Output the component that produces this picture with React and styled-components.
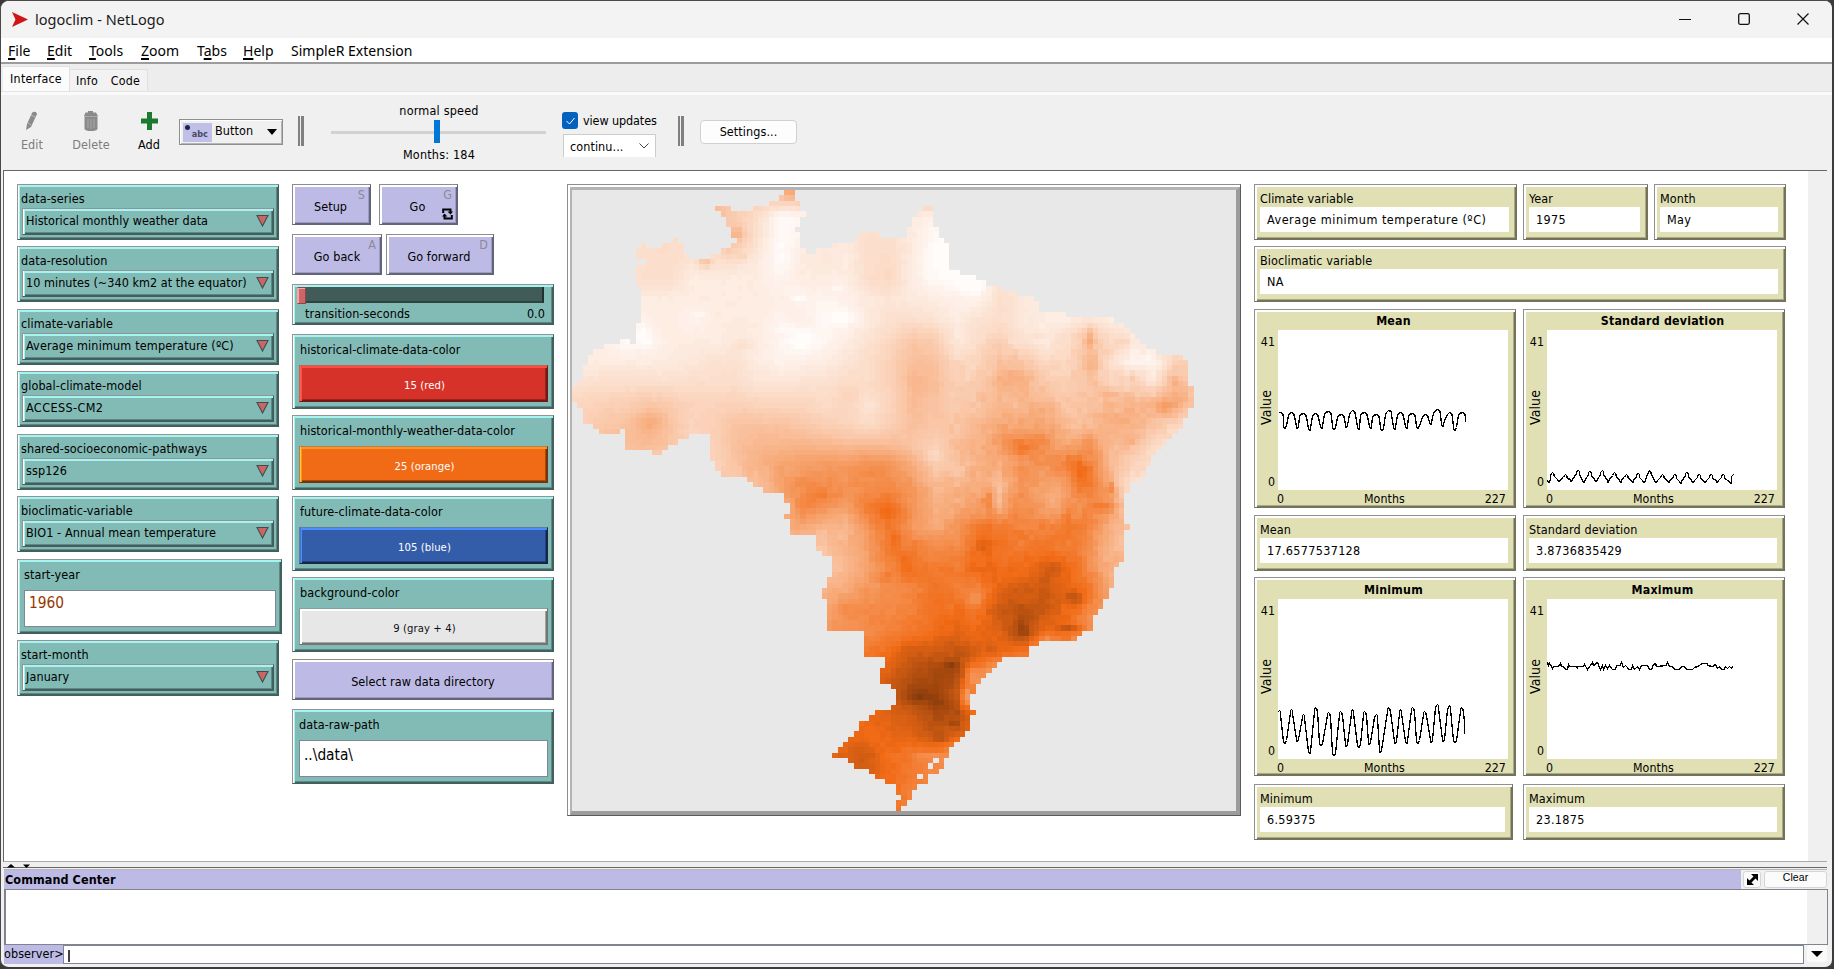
import React from "react";
import styled, { createGlobalStyle, css } from "styled-components";

const GlobalStyle = createGlobalStyle`
  *, *::before, *::after { box-sizing: border-box; }
  html, body { margin: 0; background: #3b393c; overflow: hidden; }
  body {
    font-family: "DejaVu Sans Condensed", "DejaVu Sans", Tahoma, sans-serif;
    font-size: 12.5px;
    letter-spacing: 0.08px;
    color: #000;
  }
`;

const uiFont = css`font-family: "Noto Sans", "Open Sans", sans-serif;`;

/* ---------- window chrome ---------- */

const Window = styled.div`
  width: 1834px;
  height: 969px;
  display: flex;
  flex-direction: column;
  background: #f0f0f0;
  border: 1px solid #4a484b;
  border-right: 2px solid #3c3c3e;
  border-bottom: 2px solid #3c3a3d;
  border-radius: 9px;
  overflow: hidden;
`;

const TitleBar = styled.header`
  ${uiFont}
  height: 37px;
  flex: none;
  display: flex;
  align-items: center;
  background: #f3f3f3;
  padding: 0 0 1px 10px;
  font-size: 14.5px;
  letter-spacing: 0.03px;
  svg { display: block; }
`;

const TitleText = styled.span`
  flex: 1;
  padding-left: 7px;
  color: #1a1a1a;
`;

const WindowControls = styled.div`
  display: flex;
  padding-right: 23px;
  gap: 47px;
`;

const MenuBar = styled.nav`
  ${uiFont}
  height: 26px;
  flex: none;
  display: flex;
  align-items: center;
  gap: 16px;
  padding-left: 7px;
  background: #fff;
  border-bottom: 2px solid #9c9c9c;
  font-size: 14px;
  letter-spacing: 0.02px;
`;

const MenuItem = styled.span`
  width: ${(p) => p.$w}px;
  white-space: nowrap;
  u { text-underline-offset: 2px; text-decoration-thickness: 1.5px; }
`;

const TabStrip = styled.div`
  height: 27px;
  flex: none;
  display: flex;
  align-items: flex-end;
  padding-left: 2px;
  background: #ededed;
`;

const Tab = styled.div`
  width: ${(p) => p.$w}px;
  height: ${(p) => (p.$active ? 25 : 22)}px;
  padding-top: ${(p) => (p.$active ? 5 : 4)}px;
  text-align: center;
  white-space: nowrap;
  font-size: 12.3px;
  line-height: 15px;
  letter-spacing: ${(p) => (p.$active ? 0.25 : 0.25)}px;
  background: ${(p) => (p.$active ? "#fbfbfb" : "#f2f2f2")};
  border-top: 1px solid #e0e0e0;
  border-right: ${(p) => (p.$edge ? "1px solid #e0e0e0" : "none")};
`;

const TabBase = styled.div`
  height: 4px;
  flex: none;
  background: #fafafa;
  border-top: 1px solid #e4e4e4;
`;

const Toolbar = styled.div`
  height: 75px;
  flex: none;
  display: flex;
  align-items: flex-start;
  padding-left: 7px;
  background: #f0f0f0;
`;

const Tool = styled.div`
  width: ${(p) => p.$w || 58}px;
  padding-top: 16px;
  display: flex;
  flex-direction: column;
  align-items: center;
  gap: 5px;
  line-height: 15px;
  font-size: 12.5px;
  color: ${(p) => (p.$on ? "#000" : "#7d7d7d")};
`;

const WidgetPicker = styled.div`
  margin: 24px 0 0 7px;
  width: 104px;
  height: 26px;
  border: 1px solid #8e8e8e;
  box-shadow: inset 1px 1px 0 #fff, inset -1px -1px 0 #b5b5b5;
  display: flex;
  align-items: center;
  padding: 0 5px 0 3px;
  font-size: 12.5px;
  justify-content: space-between;
`;

const PickerThumb = styled.span`
  width: 29px;
  height: 19px;
  background: #bfbfe8;
  position: relative;
  font-size: 9px;
  font-weight: bold;
  color: #4a4a66;
  text-align: right;
  padding: 5px 4px 0 0;
  line-height: 12px;
  &::before {
    content: "";
    position: absolute;
    left: 2px;
    top: 2px;
    width: 5px;
    height: 5px;
    border-radius: 50%;
    background: #222250;
  }
`;

const PickerName = styled.span`
  flex: 1;
  padding: 0 0 3px 3px;
`;

const Grip = styled.div`
  width: 6px;
  height: 30px;
  margin: 21px 0 0 ${(p) => p.$ml}px;
  border-left: 2.5px solid #808080;
  border-right: 3px solid #808080;
`;

const Speed = styled.div`
  margin: 8px 0 0 27px;
  width: 215px;
  display: flex;
  flex-direction: column;
  align-items: center;
  line-height: 15px;
`;

const SpeedTrack = styled.div`
  margin: 2px 0 4px;
  width: 215px;
  height: 23px;
  display: flex;
  align-items: center;
  justify-content: center;
  background: linear-gradient(#d2d2d2, #d2d2d2) 0 11px / 100% 3px no-repeat;
  &::after {
    content: "";
    width: 6px;
    height: 23px;
    margin-right: 4px;
    background: #0078d7;
  }
`;

const SpeedText = styled.div`
  letter-spacing: 0.2px;
  padding-left: 1px;
`;

const Updates = styled.div`
  margin: 17px 0 0 16px;
  width: 102px;
`;

const CheckRow = styled.div`
  display: flex;
  align-items: center;
  gap: 5px;
  height: 17px;
  white-space: nowrap;
  letter-spacing: -0.1px;
`;

const CheckBox = styled.span`
  width: 16px;
  height: 17px;
  border-radius: 3px;
  background: #0461bd;
  display: flex;
  align-items: center;
  justify-content: center;
`;

const UpdateSelect = styled.div`
  margin: 5px 0 0 1px;
  width: 93px;
  height: 23px;
  background: #fff;
  border: 1px solid #ccc;
  border-bottom: none;
  display: flex;
  align-items: center;
  justify-content: space-between;
  padding: 0 6px 0 6px;
`;

const SettingsButton = styled.div`
  margin: 25px 0 0 16px;
  width: 97px;
  height: 24px;
  background: #fdfdfd;
  border: 1px solid #d0d0d0;
  border-radius: 4px;
  text-align: center;
  line-height: 22px;
`;

/* ---------- interface canvas ---------- */

const Workspace = styled.main`
  height: 692px;
  flex: none;
  margin: 0 5px 0 2px;
  display: flex;
  border-top: 1px solid #666;
  border-left: 1px solid #666;
  border-bottom: 1px solid #aaa;
  background: #fff;
`;

const Board = styled.div`
  width: 1804px;
  display: flex;
  align-items: flex-start;
  padding: 13px 0 0 13px;
`;

const ScrollGutter = styled.div`
  flex: 1;
  background: #f0f0f0;
`;

const Column = styled.section`
  width: ${(p) => p.$w}px;
  margin-right: ${(p) => p.$mr || 0}px;
  display: flex;
  flex-direction: column;
`;

const Row = styled.div`
  display: flex;
  gap: ${(p) => p.$gap || 0}px;
  margin-bottom: ${(p) => p.$mb || 0}px;
`;

const palettes = {
  teal: { bg: "#82bab5", hi: "#a4f5f2", lo: "#5f8885", dark: "#415f5c", outer: "#949494" },
  lilac: { bg: "#bdbbe6", hi: "#ffffff", lo: "#9d9bbf", dark: "#64637c", outer: "#8c8c8c" },
  sand: { bg: "#e0e0b4", hi: "#ffffff", lo: "#a8a885", dark: "#73735c", outer: "#909090" },
  red: { bg: "#d73229", hi: "#ff4b40", lo: "#9c241d", dark: "#6f1a15", outer: "#b06a60", edge: "#ff5f55" },
  orange: { bg: "#f16a15", hi: "#ff9420", lo: "#a84a0f", dark: "#74330a", outer: "#b08050", edge: "#ffc928" },
  blue: { bg: "#345da9", hi: "#4c8dff", lo: "#24417a", dark: "#14264a", outer: "#5c7fa0", edge: "#3f74d4" },
  gray: { bg: "#e7e7e7", hi: "#ffffff", lo: "#a4a4a4", dark: "#747474", outer: "#8c9c9a" },
};

const tone = (key) => (p) => palettes[p.$tone][key];

const bevel = css`
  background: ${tone("bg")};
  border: 1px solid ${tone("dark")};
  border-top-color: ${tone("outer")};
  border-left-color: ${tone("outer")};
  box-shadow:
    inset 1px 0 0 ${(p) => palettes[p.$tone].edge || "#fff"},
    inset 2px 2px 0 ${tone("hi")},
    inset -1px -1px 0 ${tone("dark")},
    inset -2px -2px 0 ${tone("lo")};
`;

const Panel = styled.div`
  ${bevel}
  width: ${(p) => p.$w || 262}px;
  height: ${(p) => p.$h}px;
  flex: none;
  margin-bottom: ${(p) => p.$mb || 0}px;
  padding: ${(p) => p.$pad};
  white-space: nowrap;
  line-height: 17px;
`;

const ChooserField = styled.div`
  ${bevel}
  margin: 1px 0 0 1px;
  width: 252px;
  height: 27px;
  display: flex;
  align-items: center;
  justify-content: space-between;
  padding: 0 4px 2px 3px;
  letter-spacing: ${(p) => p.$ls}px;
`;

const TextField = styled.div`
  height: 37px;
  margin-top: 7px;
  background: #fff;
  border: 1px solid #7f8795;
  padding: ${(p) => p.$pt || 4}px 4px 0;
  font-size: 15.3px;
  letter-spacing: 0;
  line-height: 19px;
  color: ${(p) => p.$color || "#000"};
`;

const Swatch = styled.div`
  ${bevel}
  width: 249px;
  height: 37px;
  margin: 7px 0 0 -1px;
  padding-left: 2px;
  text-align: center;
  font-size: 11.2px;
  line-height: 39px;
  color: ${(p) => (p.$tone === "gray" ? "#111" : "#fff")};
`;

const CommandButton = styled.div`
  ${bevel}
  position: relative;
  width: ${(p) => p.$w}px;
  height: 41px;
  flex: none;
  margin-bottom: ${(p) => p.$mb || 0}px;
  padding-right: ${(p) => p.$pr || 0}px;
  text-align: center;
  line-height: 43px;
  white-space: nowrap;
`;

const KeyHint = styled.span`
  position: absolute;
  right: 5px;
  top: 2px;
  line-height: 15px;
  color: #8b8b94;
`;

const ForeverMark = styled.svg`
  position: absolute;
  right: 4px;
  bottom: 4px;
`;

const SliderTrack = styled.div`
  height: 16px;
  width: 247px;
  background: #415c58;
  border-right: 2px solid #23322f;
  border-bottom: 2px solid #30443f;
`;

const SliderKnob = styled.div`
  width: 9px;
  height: 17px;
  background: #cc6666;
  border: 1px solid #8e4444;
  border-left-color: #ffa0a0;
  box-shadow: inset 1px 1px 0 #f5a8a8;
`;

const SliderText = styled.div`
  display: flex;
  justify-content: space-between;
  padding: 3px 4px 0 8px;
  line-height: 15px;
`;

const MonitorValue = styled.div`
  height: 25px;
  margin-right: 2px;
  background: #fff;
  padding-left: 7px;
  line-height: 26px;
  letter-spacing: ${(p) => p.$ls}px;
`;

const ViewFrame = styled.div`
  width: 674px;
  height: 632px;
  border: 1px solid #8d8d8d;
  border-right-color: #5a5a5a;
  border-bottom-color: #5a5a5a;
  padding: 2px 0 0 2px;
  background: #fff;
`;

const ViewInner = styled.div`
  height: 628px;
  width: 670px;
  border-style: solid;
  border-color: #b4b4b4 #9c9c9c #9c9c9c #b4b4b4;
  border-width: 3px 4px 4px 2px;
  svg { display: block; background: #e8e8e8; }
`;

const PlotBody = styled.div`
  display: grid;
  grid-template-columns: 19px 230px;
  grid-template-rows: 18px 160px 17px;
  padding-left: 1px;
`;

const PlotTitle = styled.div`
  grid-column: 1 / 3;
  text-align: center;
  font-weight: bold;
  font-size: 12.3px;
  line-height: 18px;
  letter-spacing: 0.22px;
  padding-left: 20px;
`;

const YAxis = styled.div`
  display: flex;
  flex-direction: column;
  justify-content: space-between;
  align-items: flex-end;
  padding: 5px 3px 1px 0;
  line-height: 14px;
  font-size: 12.3px;
`;

const YLabel = styled.span`
  writing-mode: vertical-rl;
  transform: rotate(180deg);
  font-size: 14px;
  margin: 0 2px 9px 0;
`;

const PlotArea = styled.div`
  background: #fff;
  svg { display: block; }
`;

const XAxis = styled.div`
  grid-column: 2;
  display: flex;
  justify-content: space-between;
  padding: 0 2px 0 0;
  margin-left: -1px;
  line-height: 18px;
  font-size: 12.3px;
`;

/* ---------- command center ---------- */

const Splitter = styled.div`
  height: 6px;
  flex: none;
  margin: 0 5px 0 2px;
  background: #efefef;
  border-bottom: 1px solid #666;
  padding: 2px 0 0 4px;
  svg { display: block; }
`;

const CommandHead = styled.div`
  height: 20px;
  flex: none;
  margin: 1px 5px 0 3px;
  display: flex;
  border-top: 1px solid #b5b5b5;
`;

const CommandTitle = styled.div`
  width: 1737px;
  background: #bdbbe6;
  font-weight: bold;
  font-size: 12.5px;
  line-height: 20px;
  padding-left: 1px;
`;

const SmallButton = styled.div`
  width: ${(p) => p.$w}px;
  height: 17px;
  margin: 1px 0 0 ${(p) => p.$ml}px;
  border: 1px solid #d5d5d5;
  border-radius: 3px;
  background: #fbfbfb;
  font: 10.5px/11px "Liberation Sans", sans-serif;
  display: flex;
  justify-content: center;
  align-items: ${(p) => p.$align || "center"};
`;

const CommandOutput = styled.div`
  height: 56px;
  flex: none;
  margin-left: 3px;
  width: 1824px;
  display: flex;
  justify-content: flex-end;
  border: 1px solid #80848f;
  border-left-width: 2px;
  background: #fff;
  &::after { content: ""; width: 20px; background: #f0f0f0; }
`;

const CommandLine = styled.div`
  height: 19px;
  flex: none;
  margin: 0 5px 0 3px;
  display: flex;
`;

const Prompt = styled.div`
  width: 59px;
  background: #bdbbe6;
  line-height: 17px;
`;

const CommandInput = styled.div`
  width: 1741px;
  height: 19px;
  background: #fff;
  border: 1px solid #80848f;
  padding: 4px 0 0 4px;
  &::before { content: ""; display: block; width: 2px; height: 12px; background: #444; }
`;

const HistoryButton = styled.div`
  margin-left: 3px;
  width: 20px;
  height: 17px;
  background: #fafafa;
  border-radius: 3px;
  display: flex;
  align-items: center;
  justify-content: center;
`;

/* ---------- raster map ---------- */

const COLS = 125;
const ROWS = 117;
const CELL_W = 1509 / COLS;
const CELL_H = 1498 / ROWS;
const ORIGIN_X = 27;
const ORIGIN_Y = 36;

const outline = `509,36 534,36 534,61 546,61 546,87 558,87 558,100 546,100 546,125 534,125 534,138 546,138 546,176 558,176 558,189 582,189 582,176 618,176 618,164 667,164 667,151 679,151 679,138 727,138 727,151 788,151 788,125 800,125 800,100 812,100 812,87 824,87 824,75 848,75 848,125 860,125 860,151 872,151 872,164 884,164 884,229 908,229 908,241 945,241 945,254 969,254 969,266 1003,266 1003,279 1041,279 1041,292 1077,292 1077,305 1089,305 1089,330 1150,330 1150,343 1259,343 1259,356 1283,356 1283,369 1295,369 1295,381 1307,381 1307,394 1319,394 1319,407 1331,407 1331,420 1355,420 1355,433 1415,433 1415,445 1427,445 1427,509 1437,509 1437,560 1425,560 1425,586 1415,586 1415,612 1403,612 1403,625 1391,625 1391,637 1379,637 1379,650 1367,650 1367,663 1355,663 1355,676 1343,676 1343,701 1331,701 1331,727 1319,727 1319,740 1295,740 1295,766 1283,766 1283,843 1295,843 1295,856 1283,856 1283,932 1271,932 1271,945 1259,945 1259,996 1246,996 1246,1022 1234,1022 1234,1048 1222,1048 1222,1060 1210,1060 1210,1099 1186,1099 1186,1112 1174,1112 1174,1124 1089,1124 1089,1137 1065,1137 1065,1163 1004,1163 1004,1176 992,1176 992,1188 980,1188 980,1201 968,1201 968,1214 956,1214 956,1227 944,1227 944,1252 932,1252 932,1291 944,1291 944,1304 932,1304 932,1342 920,1342 920,1355 908,1355 908,1368 896,1368 896,1381 884,1381 884,1407 872,1407 872,1432 860,1432 860,1445 836,1445 836,1471 812,1471 812,1483 800,1483 800,1509 788,1509 788,1522 776,1522 776,1534 764,1534 764,1509 776,1509 776,1496 764,1496 764,1471 740,1471 740,1458 716,1458 716,1445 703,1445 703,1432 667,1432 667,1420 655,1420 655,1407 618,1407 618,1394 630,1394 630,1381 643,1381 643,1368 655,1368 655,1355 667,1355 667,1342 679,1342 679,1317 703,1317 703,1304 716,1304 716,1291 752,1291 752,1278 764,1278 764,1240 752,1240 752,1227 728,1227 728,1188 740,1188 740,1163 691,1163 691,1099 607,1099 607,1022 595,1022 595,996 607,996 607,971 618,971 618,919 595,919 595,907 582,907 582,868 522,868 522,830 510,830 510,817 522,817 522,791 510,791 510,766 461,766 461,753 437,753 437,740 425,740 425,727 365,727 365,714 353,714 353,689 341,689 341,625 293,625 293,637 269,637 269,650 245,650 245,663 232,663 232,676 208,676 208,663 148,663 148,612 136,612 136,625 88,625 88,612 76,612 76,599 52,599 52,561 39,561 39,548 27,548 27,509 39,509 39,497 52,497 52,458 64,458 64,433 76,433 76,420 100,420 100,407 136,407 136,394 160,394 160,407 173,407 173,356 185,356 185,266 173,266 173,215 197,215 197,202 173,202 173,176 185,176 185,164 197,164 197,176 232,176 232,164 257,164 257,151 269,151 269,164 281,164 281,189 293,189 293,202 341,202 341,189 365,189 365,176 389,176 389,164 401,164 401,151 389,151 389,125 377,125 377,100 365,100 365,87 353,87 353,75 389,75 389,87 437,87 437,75 473,75 473,61 498,61 498,48 509,48`
  .split(" ")
  .map((s) => s.split(",").map(Number));

const lagoons = ["68,107", "67,108", "65,110"];

/* temperature samples every 50 units: y -> [first x, values...] */
const field = {
  0: [500, 26, 28],
  50: [350, 28, 22, 22, 25, 28],
  100: [350, 28, 20, 14, 2, 3, 8, 8, 8, 8, 8, 6],
  150: [200, 15, 15, 14, 18, 26, 12, 2, 5, 10, 10, 14, 14, 9, 2, 0],
  200: [150, 12, 14, 14, 12, 14, 14, 9, 1, 8, 10, 8, 14, 15, 8, 1, 0],
  250: [150, 12, 14, 14, 8, 8, 8, 8, 5, 8, 8, 8, 14, 16, 8, 2, 2, 0, 12],
  300: [150, 9, 8, 8, 8, 8, 8, 8, 7, 5, 5, 6, 9, 11, 9, 8, 6, 5, 14, 10, 8],
  350: [150, 3, 7, 8, 5, 8, 8, 8, 5, 7, 3, 3, 9, 13, 14, 12, 8, 12, 14, 10, 8, 8, 12, 8, 7],
  400: [100, 7, 3, 3, 8, 8, 8, 10, 8, 4, 1, 4, 8, 12, 17, 24, 22, 10, 15, 20, 12, 9, 14, 26, 18, 10, 12],
  450: [50, 8, 8, 8, 8, 8, 10, 12, 12, 8, 5, 7, 8, 11, 14, 20, 26, 26, 17, 18, 26, 25, 18, 16, 26, 15, 8, 7, 18],
  500: [0, 12, 12, 14, 14, 13, 13, 14, 14, 14, 11, 11, 12, 13, 15, 15, 19, 28, 27, 19, 22, 28, 28, 22, 20, 25, 18, 18, 10, 28, 20],
  550: [0, 18, 18, 19, 20, 23, 21, 18, 18, 19, 18, 17, 17, 15, 18, 13, 18, 27, 25, 22, 24, 28, 28, 29, 23, 24, 28, 28, 30, 32, 22],
  600: [50, 19, 23, 25, 30, 24, 18, 20, 25, 25, 25, 23, 20, 18, 15, 20, 26, 24, 24, 28, 32, 32, 34, 26, 26, 30, 30, 25, 18],
  650: [150, 27, 27, 25, 18, 19, 26, 28, 28, 29, 28, 27, 27, 27, 24, 20, 26, 30, 34, 42, 38, 32, 36, 28, 28, 16, 12],
  700: [350, 18, 25, 30, 33, 35, 36, 36, 39, 38, 32, 22, 24, 30, 32, 37, 38, 42, 44, 27, 20, 14],
  750: [400, 24, 26, 33, 40, 40, 38, 40, 40, 36, 28, 28, 32, 30, 38, 34, 36, 44, 30, 12],
  800: [500, 28, 40, 39, 35, 44, 46, 38, 30, 32, 35, 34, 40, 34, 38, 40, 38, 18],
  850: [500, 30, 32, 28, 28, 38, 46, 36, 32, 36, 44, 44, 42, 42, 46, 42, 30, 25],
  900: [600, 24, 30, 35, 44, 44, 40, 40, 49, 47, 45, 47, 44, 40, 28, 24],
  950: [600, 24, 28, 34, 42, 46, 44, 44, 48, 48, 49, 54, 52, 40, 30],
  1000: [600, 30, 32, 37, 39, 42, 46, 44, 42, 54, 56, 58, 54, 46, 32],
  1050: [600, 32, 40, 40, 40, 42, 48, 48, 48, 58, 62, 58, 50, 42, 35],
  1100: [650, 38, 40, 42, 44, 48, 54, 50, 54, 67, 50, 50, 38],
  1150: [700, 44, 50, 58, 58, 60, 56, 52, 46, 35],
  1200: [700, 50, 56, 62, 66, 66, 40, 34],
  1250: [750, 58, 68, 68, 61, 38],
  1300: [700, 50, 54, 58, 64, 66, 45],
  1350: [650, 52, 50, 52, 54, 60, 54],
  1400: [600, 53, 54, 54, 48, 45, 42, 38],
  1450: [650, 57, 55, 50, 44, 40],
  1500: [750, 48, 42],
  1550: [750, 48, 42],
};

/* local departures from the samples: x, y, x radius, y radius, amount */
const anomalies = [
  [330, 212, 14, 10, 14], [402, 140, 12, 16, 6], [520, 45, 16, 14, 6], [380, 188, 14, 8, 7],
  [415, 200, 12, 8, 7], [215, 592, 30, 24, 3], [1205, 385, 10, 20, 8], [1212, 460, 9, 40, 5],
  [1375, 565, 22, 18, 6], [1180, 720, 14, 30, 8], [1155, 685, 10, 14, 5], [1050, 655, 40, 20, 3],
  [600, 775, 34, 14, 4], [570, 795, 16, 14, 3], [750, 815, 34, 18, 4], [762, 885, 12, 26, 5],
  [785, 940, 14, 24, 5], [970, 890, 20, 44, 4], [1170, 1022, 22, 14, 12], [1060, 1105, 30, 14, 3],
  [1160, 1092, 30, 8, 12], [945, 1025, 18, 18, -6], [1200, 640, 12, 16, 6], [972, 785, 9, 24, 9],
  [1000, 765, 12, 50, -6], [850, 675, 18, 14, -6], [825, 1260, 34, 14, 6], [865, 1276, 20, 12, 5],
  [890, 1182, 22, 10, 8], [895, 1325, 14, 10, 6], [922, 1260, 10, 26, -18], [932, 1205, 12, 18, -12],
  [865, 1358, 16, 8, 7], [685, 1400, 30, 24, 3], [830, 1400, 30, 12, -4], [540, 298, 14, 8, -6],
  [530, 278, 20, 8, -2], [630, 270, 20, 8, -3], [550, 395, 24, 24, -3], [510, 370, 20, 8, -3],
  [640, 340, 40, 14, -3], [190, 385, 12, 24, -5], [315, 335, 18, 10, -3], [1030, 490, 40, 14, 3],
  [1125, 800, 16, 50, -5], [1250, 755, 10, 16, 12], [1225, 800, 22, 12, 7], [930, 265, 28, 18, -4],
  [1105, 1112, 14, 8, -8], [1120, 945, 16, 20, 5], [1390, 495, 14, 18, 6], [1310, 445, 36, 24, -3],
  [1250, 525, 26, 8, 8], [1300, 490, 8, 16, 7], [1285, 400, 8, 8, 8], [420, 410, 20, 14, 3],
  [665, 525, 26, 14, 2], [710, 560, 16, 14, -3], [960, 950, 50, 10, 3], [745, 970, 14, 14, 3],
];

const inside = (x, y) => {
  let hit = false;
  for (let i = 0, j = outline.length - 1; i < outline.length; j = i++) {
    const [xi, yi] = outline[i];
    const [xj, yj] = outline[j];
    if (yi > y !== yj > y && x < ((xj - xi) * (y - yi)) / (yj - yi) + xi) hit = !hit;
  }
  return hit;
};

const sample = (i, j) => {
  const row = field[j * 50];
  if (!row) return 10;
  const k = Math.min(Math.max(i - row[0] / 50, 0), row.length - 2);
  return row[k + 1];
};

const jitter = (c, r) => {
  const v = Math.sin(c * 127.1 + r * 311.7) * 43758.5453;
  return v - Math.floor(v) - 0.5;
};

/* the light half of the scale is compressed, the dark half is linear */
const tonal = (t) => (t < 24 ? t * 0.79 : t < 44 ? 18.96 + (t - 24) * 1.252 : t);

const intensity = (x, y, c, r) => {
  const i = Math.floor(x / 50);
  const j = Math.floor(y / 50);
  const u = x / 50 - i;
  const w = y / 50 - j;
  let t =
    (sample(i, j) * (1 - u) + sample(i + 1, j) * u) * (1 - w) +
    (sample(i, j + 1) * (1 - u) + sample(i + 1, j + 1) * u) * w;
  anomalies.forEach(([ax, ay, rx, ry, amt]) => {
    t += amt * Math.exp(-(((x - ax) / rx) ** 2) - ((y - ay) / ry) ** 2);
  });
  const rough = x > 880 && y > 380 ? 2.6 : y > 700 ? 1.8 : 0.6;
  t += jitter(c, r) * rough + jitter(c >> 1, (r >> 1) + 57) * rough;
  return tonal(Math.max(1, Math.min(73, t)));
};

const shade = (t) => {
  const base = [241, 106, 21];
  const rgb = base.map((b) => (t <= 50 ? 255 + ((b - 255) * t) / 50 : b * (1 - (t - 50) / 52)));
  return `rgb(${rgb.map(Math.round).join(",")})`;
};

const patches = (() => {
  const out = [];
  for (let r = 0; r < ROWS; r++) {
    for (let c = 0; c < COLS; c++) {
      const x = ORIGIN_X + (c + 0.5) * CELL_W;
      const y = ORIGIN_Y + (r + 0.5) * CELL_H;
      if (inside(x, y) && !lagoons.includes(`${c},${r}`)) {
        out.push({ c, r, fill: shade(Math.round(intensity(x, y, c, r))) });
      }
    }
  }
  return out;
})();

const WorldMap = () => (
  <svg width="664" height="621" viewBox={`0 0 ${COLS} ${ROWS}`} preserveAspectRatio="none" shapeRendering="crispEdges">
    {patches.map(({ c, r, fill }) => (
      <rect key={`${c}-${r}`} x={c} y={r} width="1" height="1" fill={fill} />
    ))}
  </svg>
);

/* ---------- plots ---------- */

const wave = (peaks, troughs, troughFirst, round) => {
  const pts = [];
  const addPeak = ([x, y]) =>
    pts.push([x - 9 * round, y + 10], [x - 6 * round, y + 4], [x, y], [x + 6 * round, y + 3], [x + 8 * round, y + 12]);
  const addTrough = ([x, y]) => pts.push([x - 3, y - 6], [x - 1, y], [x + 2, y], [x + 4, y - 7]);
  const n = Math.max(peaks.length, troughs.length);
  for (let i = 0; i < n; i++) {
    if (troughFirst && troughs[i]) addTrough(troughs[i]);
    if (peaks[i]) addPeak(peaks[i]);
    if (!troughFirst && troughs[i]) addTrough(troughs[i]);
  }
  return pts;
};

const toPath = (pts, ox, oy, maxX) =>
  pts
    .filter(([x]) => x >= ox && x <= maxX)
    .map(([x, y]) => `${Math.round((x - ox) / 3) + 0.5},${Math.round((y - oy) / 3) + 0.5}`)
    .join(" ");

const meanLine = toPath(
  [[99, 710]].concat(
    wave(
      [[104, 710], [138, 710], [173, 714], [210, 714], [248, 708], [287, 716], [321, 706], [356, 711], [392, 716], [430, 706], [465, 710], [500, 714], [540, 716], [575, 703], [612, 712], [650, 710]],
      [[118, 758], [155, 760], [192, 766], [228, 760], [265, 762], [302, 757], [339, 762], [375, 760], [409, 765], [447, 762], [483, 760], [517, 758], [555, 748], [591, 752], [628, 764]],
      false, 1.15
    ),
    [[659, 724], [659, 738]]
  ),
  99, 465, 660
);

const deviationLine = toPath(
  wave(
    [[126, 890], [165, 897], [203, 884], [238, 888], [275, 886], [312, 890], [348, 896], [383, 894], [417, 886], [456, 896], [493, 896], [529, 890], [566, 896], [602, 896], [638, 896], [668, 898]],
    [[115, 920], [145, 918], [182, 918], [220, 920], [256, 918], [293, 920], [330, 920], [366, 922], [400, 922], [436, 922], [475, 920], [510, 924], [547, 922], [583, 922], [620, 922], [660, 924]],
    true, 0.6
  ),
  111, 465, 668
);

const minimumLine = toPath(
  [[99, 600]].concat(
    wave(
      [[102, 600], [138, 597], [174, 612], [211, 592], [250, 606], [286, 602], [321, 598], [358, 602], [392, 612], [430, 592], [465, 598], [502, 590], [538, 602], [575, 582], [611, 586], [649, 592]],
      [[118, 698], [155, 694], [192, 730], [226, 706], [265, 736], [302, 708], [340, 710], [371, 702], [404, 726], [449, 700], [483, 698], [517, 698], [557, 696], [593, 694], [628, 696]],
      false, 0.5
    ),
    [[656, 640], [658, 670]]
  ),
  99, 267, 660
);

const maximumLine = toPath(
  [[111, 455], [114, 466], [118, 458], [122, 467], [126, 474], [130, 467], [145, 467], [150, 460], [153, 467], [160, 467], [164, 478], [170, 478], [173, 462], [178, 467], [198, 467], [200, 474], [202, 467], [218, 467], [222, 462], [232, 478], [246, 456], [250, 466], [262, 455], [270, 476], [275, 464], [280, 476], [285, 464], [290, 474], [298, 466], [303, 474], [306, 478], [315, 478], [318, 466], [330, 466], [333, 456], [338, 472], [346, 466], [350, 470], [354, 478], [362, 478], [366, 464], [372, 476], [380, 468], [388, 476], [392, 465], [412, 465], [416, 478], [424, 478], [428, 462], [434, 458], [438, 467], [468, 466], [472, 455], [478, 467], [487, 467], [492, 478], [508, 478], [512, 467], [520, 467], [530, 478], [546, 478], [552, 470], [562, 468], [575, 458], [590, 458], [592, 466], [605, 467], [614, 462], [620, 474], [626, 468], [632, 478], [642, 478], [646, 468], [652, 474], [658, 468], [662, 474], [667, 468]],
  111, 267, 668
);

const Plot = ({ title, line, top = 2 }) => (
  <Panel $tone="sand" $h={199} $pad={`${top}px 3px 0 3px`}>
    <PlotBody>
      <PlotTitle>{title}</PlotTitle>
      <YAxis>
        <span>41</span>
        <YLabel>Value</YLabel>
        <span>0</span>
      </YAxis>
      <PlotArea>
        <svg width="230" height="160" shapeRendering="crispEdges">
          <polyline points={line} fill="none" stroke="#000" strokeWidth="1.3" />
        </svg>
      </PlotArea>
      <XAxis>
        <span>0</span>
        <span>Months</span>
        <span>227</span>
      </XAxis>
    </PlotBody>
  </Panel>
);

/* ---------- widgets ---------- */

const Chooser = ({ label, value, mb, ls = 0.1 }) => (
  <Panel $tone="teal" $h={56} $mb={mb} $pad="5px 4px 0 3px">
    {label}
    <ChooserField $tone="teal" $ls={ls}>
      {value}
      <svg width="13" height="13" viewBox="0 0 13 13">
        <path d="M1 1.5H12L6.5 12Z" fill="#cc6666" stroke="#3f4e4c" strokeWidth="1.1" />
      </svg>
    </ChooserField>
  </Panel>
);

const ColorInput = ({ label, value, tone: swatchTone, mb }) => (
  <Panel $tone="teal" $h={75} $mb={mb} $pad="6px 6px 0 7px">
    {label}
    <Swatch $tone={swatchTone}>{value}</Swatch>
  </Panel>
);

const Monitor = ({ label, value, w, ls = 0.32 }) => (
  <Panel $tone="sand" $w={w} $h={56} $pad="5px 5px 0 5px">
    {label}
    <MonitorValue $ls={ls}>{value}</MonitorValue>
  </Panel>
);

const PencilIcon = () => (
  <svg width="14" height="21" viewBox="0 0 14 21">
    <path d="M2 13 7 2Q8 0 11 1L12 3 6 16 1 19Z" fill="#8b8b8b" />
    <path d="M6 4l4 2M3 12l3 2" stroke="#b9b9b9" />
  </svg>
);

const TrashIcon = () => (
  <svg width="16" height="21" viewBox="0 0 16 21">
    <path d="M5 0h5v1.500h3l2 3.500H1l1.500-3.500H5ZM1.500 5.500h13v12.500q-1 2-6.500 2t-6.500-2Z" fill="#8b8b8b" />
    <path d="M1.500 5.500h13M5 8v9M8 8v10M11 8v9" stroke="#a9a9a9" />
  </svg>
);

const PlusIcon = () => (
  <svg width="19" height="21" viewBox="0 0 19 21">
    <path d="M7 1h5v6.500h6v5h-6V19H7v-6.500H1v-5h6Z" fill="#1a7a30" />
  </svg>
);

const menus = [
  ["F", "ile", 23],
  ["E", "dit", 26],
  ["T", "ools", 36],
  ["Z", "oom", 40],
];

export default function App() {
  return (
    <>
      <GlobalStyle />
      <Window>
        <TitleBar>
          <svg width="17" height="17" viewBox="0 0 17 17">
            <path d="M1 1 17 8.500 1 16 4.500 8.500Z" fill="#d01515" />
          </svg>
          <TitleText>logoclim - NetLogo</TitleText>
          <WindowControls>
            <svg width="12" height="12"><path d="M0 6.500H12" stroke="#111" /></svg>
            <svg width="12" height="12"><rect x=".7" y=".7" width="10.600" height="10.600" rx="1.500" fill="none" stroke="#111" strokeWidth="1.300" /></svg>
            <svg width="12" height="12"><path d="M.5.5 11.500 11.500M11.500.5.5 11.500" stroke="#111" strokeWidth="1.200" /></svg>
          </WindowControls>
        </TitleBar>
        <MenuBar>
          {menus.map(([key, rest, w]) => (
            <MenuItem key={key} $w={w}><u>{key}</u>{rest}</MenuItem>
          ))}
          <MenuItem $w={30}>T<u>a</u>bs</MenuItem>
          <MenuItem $w={32}><u>H</u>elp</MenuItem>
          <MenuItem $w={130}>SimpleR Extension</MenuItem>
        </MenuBar>
        <TabStrip>
          <Tab $w={67} $active $edge>Interface</Tab>
          <Tab $w={34}>Info</Tab>
          <Tab $w={44} $edge>Code</Tab>
        </TabStrip>
        <TabBase />
        <Toolbar>
          <Tool $w={48}><PencilIcon />Edit</Tool>
          <Tool $w={70}><TrashIcon />Delete</Tool>
          <Tool $w={46} $on><PlusIcon />Add</Tool>
          <WidgetPicker>
            <PickerThumb>abc</PickerThumb>
            <PickerName>Button</PickerName>
            <svg width="10" height="6"><path d="M0 0H10L5 6Z" /></svg>
          </WidgetPicker>
          <Grip $ml={15} />
          <Speed>
            <SpeedText>normal speed</SpeedText>
            <SpeedTrack />
            <SpeedText>Months: 184</SpeedText>
          </Speed>
          <Updates>
            <CheckRow>
              <CheckBox>
                <svg width="9" height="8"><path d="M.5 4 3.500 7 8.500 1" fill="none" stroke="#fff" /></svg>
              </CheckBox>
              view updates
            </CheckRow>
            <UpdateSelect>
              continu...
              <svg width="10" height="6"><path d="M.5.5 5 5 9.500.5" fill="none" stroke="#444" /></svg>
            </UpdateSelect>
          </Updates>
          <Grip $ml={14} />
          <SettingsButton>Settings...</SettingsButton>
        </Toolbar>

        <Workspace>
          <Board>
            <Column $w={265} $mr={10}>
              <Chooser label="data-series" value="Historical monthly weather data" mb={6} ls={0.03} />
              <Chooser label="data-resolution" value="10 minutes (~340 km2 at the equator)" mb={7} ls={0.04} />
              <Chooser label="climate-variable" value="Average minimum temperature (ºC)" mb={6} ls={0.16} />
              <Chooser label="global-climate-model" value="ACCESS-CM2" mb={7} ls={0.4} />
              <Chooser label="shared-socioeconomic-pathways" value="ssp126" mb={6} />
              <Chooser label="bioclimatic-variable" value="BIO1 - Annual mean temperature" mb={7} />
              <Panel $tone="teal" $w={265} $h={75} $mb={6} $pad="6px 5px 0 6px">
                start-year
                <TextField $color="#963700" $pt={3}>1960</TextField>
              </Panel>
              <Chooser label="start-month" value="January" />
            </Column>

            <Column $w={262} $mr={13}>
              <Row $gap={8} $mb={9}>
                <CommandButton $tone="lilac" $w={79} $pr={2}>Setup<KeyHint>S</KeyHint></CommandButton>
                <CommandButton $tone="lilac" $w={79} $pr={2}>
                  Go
                  <KeyHint>G</KeyHint>
                  <ForeverMark width="11" height="12" viewBox="0 0 11 12">
                    <path d="M1.200 5V1.600H8.500V4M9.800 7V10.400H2.500V8" fill="none" stroke="#000" strokeWidth="2" />
                    <path d="M5.500 3.500H11L8.500 6.500ZM0 8.500H5.500L2.500 5.500Z" />
                  </ForeverMark>
                </CommandButton>
              </Row>
              <Row $gap={4} $mb={9}>
                <CommandButton $tone="lilac" $w={90}>Go back<KeyHint>A</KeyHint></CommandButton>
                <CommandButton $tone="lilac" $w={108} $pr={2}>Go forward<KeyHint>D</KeyHint></CommandButton>
              </Row>
              <Panel $tone="teal" $h={41} $mb={9} $pad="2px 4px">
                <SliderTrack><SliderKnob /></SliderTrack>
                <SliderText><span>transition-seconds</span><span>0.0</span></SliderText>
              </Panel>
              <ColorInput label="historical-climate-data-color" value="15 (red)" tone="red" mb={6} />
              <ColorInput label="historical-monthly-weather-data-color" value="25 (orange)" tone="orange" mb={6} />
              <ColorInput label="future-climate-data-color" value="105 (blue)" tone="blue" mb={6} />
              <ColorInput label="background-color" value="9 (gray + 4)" tone="gray" mb={7} />
              <CommandButton $tone="lilac" $w={262} $mb={9}>Select raw data directory</CommandButton>
              <Panel $tone="teal" $h={75} $pad="6px 5px 0 6px">
                data-raw-path
                <TextField $pt={5}>..\data\</TextField>
              </Panel>
            </Column>

            <Column $w={674} $mr={13}>
              <ViewFrame>
                <ViewInner><WorldMap /></ViewInner>
              </ViewFrame>
            </Column>

            <Column $w={533}>
              <Row $gap={6} $mb={6}>
                <Monitor label="Climate variable" value="Average minimum temperature (ºC)" w={263} ls={0.52} />
                <Monitor label="Year" value="1975" w={125} />
                <Monitor label="Month" value="May" w={132} />
              </Row>
              <Row $mb={7}>
                <Monitor label="Bioclimatic variable" value="NA" w={532} />
              </Row>
              <Row $gap={7} $mb={7}>
                <Plot title="Mean" line={meanLine} />
                <Plot title="Standard deviation" line={deviationLine} />
              </Row>
              <Row $gap={7} $mb={6}>
                <Monitor label="Mean" value="17.6577537128" />
                <Monitor label="Standard deviation" value="3.8736835429" />
              </Row>
              <Row $gap={7} $mb={8}>
                <Plot title="Minimum" line={minimumLine} top={3} />
                <Plot title="Maximum" line={maximumLine} top={3} />
              </Row>
              <Row $gap={10}>
                <Monitor label="Minimum" value="6.59375" w={259} />
                <Monitor label="Maximum" value="23.1875" />
              </Row>
            </Column>
          </Board>
          <ScrollGutter />
        </Workspace>

        <Splitter>
          <svg width="24" height="4"><path d="M0 3.500 4 0 8 3.500ZM16 0.500H23L19.500 4Z" /></svg>
        </Splitter>
        <CommandHead>
          <CommandTitle>Command Center</CommandTitle>
          <SmallButton $w={18} $ml={2}>
            <svg width="11" height="11"><path d="M4 0H11V7L8.500 4.500 4.500 8.500 7 11H0V4L2.500 6.500 6.500 2.500Z" /></svg>
          </SmallButton>
          <SmallButton $w={63} $ml={3} $align="flex-start">Clear</SmallButton>
        </CommandHead>
        <CommandOutput />
        <CommandLine>
          <Prompt>observer&gt;</Prompt>
          <CommandInput />
          <HistoryButton>
            <svg width="12" height="6"><path d="M0 0H12L6 6Z" /></svg>
          </HistoryButton>
        </CommandLine>
      </Window>
    </>
  );
}
